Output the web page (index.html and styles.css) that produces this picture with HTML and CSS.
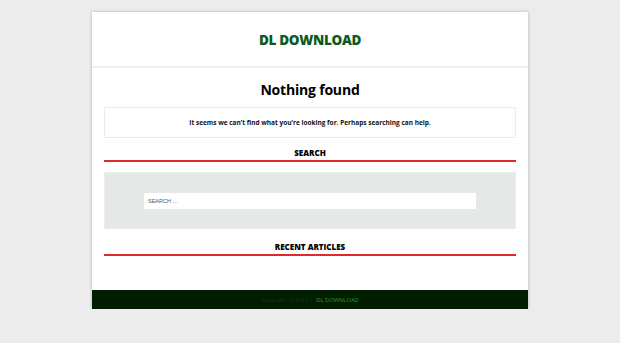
FILE: index.html
```html
<!DOCTYPE html>
<html lang="en">
<head>
    <meta charset="UTF-8">
    <meta name="viewport" content="width=device-width, initial-scale=1.0">
    <title>Nothing found - DL DOWNLOAD</title>
    <link rel="stylesheet" href="styles.css">
</head>
<body>

<div class="wrapper">
    <header class="site-header">
        <a class="site-title">DL DOWNLOAD</a>
    </header>

    <main class="site-main">
        <h1 class="page-title">Nothing found</h1>

        <div class="notice">
            <p>It seems we can&rsquo;t find what you&rsquo;re looking for. Perhaps searching can help.</p>
        </div>

        <h2 class="widget-title">SEARCH</h2>
        <div class="search-box">
            <input type="search" class="search-field" placeholder="SEARCH ...">
        </div>

        <h2 class="widget-title">RECENT ARTICLES</h2>
    </main>

    <footer class="site-footer">
        Copyright &copy; 2024 | <a>DL DOWNLOAD</a>
    </footer>
</div>

</body>
</html>
```

FILE: styles.css
```css
body {
    font-family: "Open Sans", Arial, sans-serif;
    margin: 0;
    padding: 0;
    background-color: #ececec;
}

.wrapper {
    width: 436px;
    margin: 12px auto 0;
    background-color: #fff;
    box-shadow: 0 0 3px rgba(0, 0, 0, 0.25);
}

.site-header {
    height: 54px;
    border-bottom: 2px solid #eef0ef;
    display: flex;
    align-items: center;
    justify-content: center;
}

.site-title {
    color: #0d5a1e;
    font-size: 13.5px;
    font-weight: 800;
    letter-spacing: -0.3px;
    padding-top: 1px;
}

.site-main {
    padding: 11px 12px 34px;
}

.page-title {
    margin: 0;
    text-align: center;
    font-size: 14px;
    line-height: 22px;
    font-weight: 700;
    letter-spacing: -0.2px;
    color: #000;
}

.notice {
    margin-top: 6px;
    height: 29px;
    border: 1px solid #ebebeb;
    display: flex;
    align-items: center;
    justify-content: center;
}

.notice p {
    margin: 0;
    font-size: 6.5px;
    font-weight: 700;
    color: #111;
}

.widget-title {
    margin: 0;
    text-align: center;
    font-size: 8px;
    line-height: 12px;
    font-weight: 800;
    color: #000;
    padding: 9px 0 1px;
    border-bottom: 2px solid #de2a2a;
}

.search-box {
    margin: 10px 0 3px;
    height: 57px;
    background-color: #e4e8e6;
    border: 1px solid #ecefed;
    display: flex;
    justify-content: center;
    padding-top: 20px;
    box-sizing: border-box;
}

.search-field {
    width: 332px;
    height: 16px;
    box-sizing: border-box;
    border: none;
    padding: 0 4px;
    font-family: "Liberation Sans", Arial, sans-serif;
    font-size: 5.5px;
    background-color: #fff;
}

.search-field::placeholder {
    color: #555;
}

.site-footer {
    background-color: #001d00;
    height: 19px;
    display: flex;
    align-items: center;
    justify-content: center;
    font-size: 5.8px;
    color: #0e3a10;
}

.site-footer a {
    color: #2f9b2f;
    margin-left: 3px;
}
```
